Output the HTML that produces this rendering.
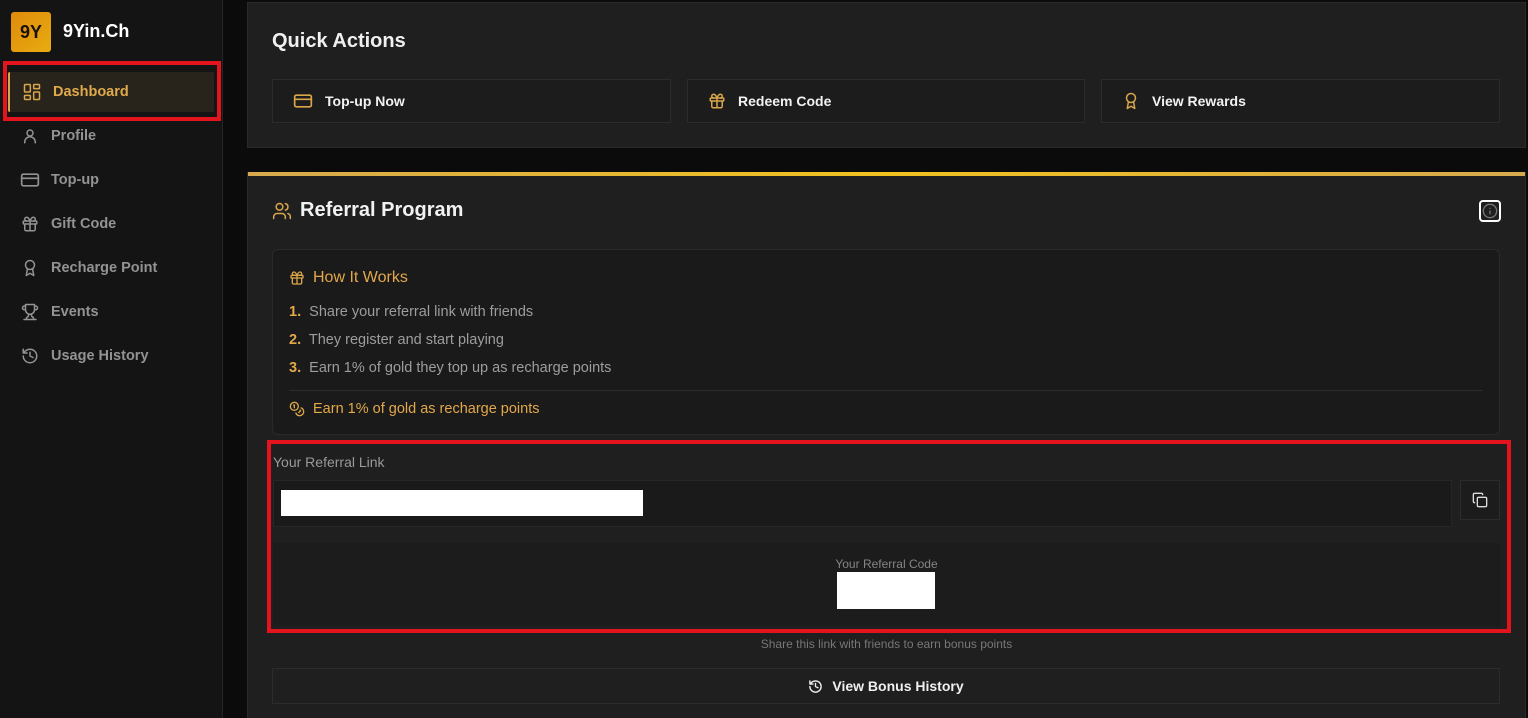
<!DOCTYPE html>
<html style="width:1528px;height:718px;overflow:hidden"><head><meta charset="utf-8"><style>
*{box-sizing:border-box;margin:0;padding:0}
body{width:1528px;height:718px;overflow:hidden;background:#0b0b0b;font-family:"Liberation Sans",sans-serif;position:relative}
.abs{position:absolute}
.side{left:0;top:0;width:223px;height:718px;background:#141414;border-right:1px solid #262626}
.logo{left:11px;top:12px;width:40px;height:40px;border-radius:3px;background:linear-gradient(135deg,#e08a0c,#e8ac10);color:#1a1206;font-weight:bold;font-size:18px;display:flex;align-items:center;justify-content:center}
.brand{left:63px;top:21px;color:#fff;font-weight:bold;font-size:18px}
.nav{left:0;width:222px;height:44px;display:flex;align-items:center;color:#939393;font-size:14.5px;font-weight:bold}
.nav .ic{width:20px;height:20px;margin-left:20px;margin-right:11px;display:flex;align-items:center;justify-content:center}
.card{background:#1f1f1f;border:1px solid #2a2a2a}
.qa{top:79px;height:44px;background:#1c1c1c;border:1px solid #2c2c2c;display:flex;align-items:center;color:#f2f2f2;font-weight:bold;font-size:14px}
.qa svg{margin-left:20px;margin-right:12px}
.gray{color:#9d9d9d;font-size:14.5px}
.num{color:#e2a84a;font-weight:bold}
svg{fill:none;stroke-linecap:round;stroke-linejoin:round}
</style></head><body>
<div class="abs side"></div>
<div class="abs logo">9Y</div>
<div class="abs brand">9Yin.Ch</div>
<div class="abs" style="left:8px;top:72px;width:206px;height:40px;background:#28231b;border-left:2px solid #d9a64a;border-radius:2px"></div>
<div class="abs nav" style="top:70px;color:#dfaa4c"><span class="ic" style="margin-left:22px"><svg width="20" height="20" viewBox="0 0 24 24" stroke="#d9a64a" stroke-width="1.8"><rect x="3" y="3" width="7" height="9" rx="1"/><rect x="14" y="3" width="7" height="5" rx="1"/><rect x="14" y="12" width="7" height="9" rx="1"/><rect x="3" y="16" width="7" height="5" rx="1"/></svg></span>Dashboard</div>
<div class="abs" style="left:3px;top:61px;width:218px;height:60px;border:4px solid #e4141e"></div>
<div class="abs nav" style="top:114px"><span class="ic"><svg width="18" height="18" viewBox="0 0 24 24" stroke="#939393" stroke-width="2"><circle cx="12" cy="8" r="4"/><path d="M5 21v-1a6 6 0 0 1 14 0v1"/></svg></span>Profile</div>
<div class="abs nav" style="top:158px"><span class="ic"><svg width="20" height="20" viewBox="0 0 24 24" stroke="#939393" stroke-width="2"><rect x="2" y="5" width="20" height="14" rx="2"/><path d="M2 10h20"/></svg></span>Top-up</div>
<div class="abs nav" style="top:202px"><span class="ic"><svg width="18" height="18" viewBox="0 0 24 24" stroke="#939393" stroke-width="2"><rect x="3" y="8" width="18" height="4" rx="1"/><path d="M12 8v13M19 12v7a2 2 0 0 1-2 2H7a2 2 0 0 1-2-2v-7M7.5 8a2.5 2.5 0 0 1 0-5C10 3 12 8 12 8s2-5 4.5-5a2.5 2.5 0 0 1 0 5"/></svg></span>Gift Code</div>
<div class="abs nav" style="top:246px"><span class="ic"><svg width="18" height="18" viewBox="0 0 24 24" stroke="#939393" stroke-width="2"><circle cx="12" cy="8" r="6"/><path d="M15.5 13.5 17 22l-5-3-5 3 1.5-8.5"/></svg></span>Recharge Point</div>
<div class="abs nav" style="top:290px"><span class="ic"><svg width="18" height="18" viewBox="0 0 24 24" stroke="#939393" stroke-width="2"><path d="M6 9H4.5a2.5 2.5 0 0 1 0-5H6M18 9h1.5a2.5 2.5 0 0 0 0-5H18M4 22h16M10 14.7V17c0 .6-.5 1-1 1.2C7.8 18.8 7 20.2 7 22M14 14.7V17c0 .6.5 1 1 1.2 1.2.6 2 2 2 3.8M18 2H6v7a6 6 0 0 0 12 0V2z"/></svg></span>Events</div>
<div class="abs nav" style="top:334px"><span class="ic"><svg width="18" height="18" viewBox="0 0 24 24" stroke="#939393" stroke-width="2"><path d="M3 12a9 9 0 1 0 9-9 9.75 9.75 0 0 0-6.74 2.74L3 8M3 3v5h5M12 7v5l4 2"/></svg></span>Usage History</div>

<div class="abs card" style="left:247px;top:2px;width:1279px;height:146px"></div>
<div class="abs" style="left:272px;top:30px;color:#f0f0f0;font-weight:bold;font-size:20px">Quick Actions</div>
<div class="abs qa" style="left:272px;width:399px"><svg width="20" height="20" viewBox="0 0 24 24" stroke="#d9a64a" stroke-width="2"><rect x="2" y="5" width="20" height="14" rx="2"/><path d="M2 10h20"/></svg>Top-up Now</div>
<div class="abs qa" style="left:687px;width:398px"><svg width="18" height="18" viewBox="0 0 24 24" stroke="#d9a64a" stroke-width="2"><rect x="3" y="8" width="18" height="4" rx="1"/><path d="M12 8v13M19 12v7a2 2 0 0 1-2 2H7a2 2 0 0 1-2-2v-7M7.5 8a2.5 2.5 0 0 1 0-5C10 3 12 8 12 8s2-5 4.5-5a2.5 2.5 0 0 1 0 5"/></svg>Redeem Code</div>
<div class="abs qa" style="left:1101px;width:399px"><svg width="18" height="18" viewBox="0 0 24 24" stroke="#d9a64a" stroke-width="2"><circle cx="12" cy="8" r="6"/><path d="M15.5 13.5 17 22l-5-3-5 3 1.5-8.5"/></svg>View Rewards</div>

<div class="abs card" style="left:247px;top:172px;width:1279px;height:546px;border-top:none;border-bottom:none"></div>
<div class="abs" style="left:248px;top:172px;width:1277px;height:4px;background:linear-gradient(90deg,#d6a94e,#f1c21e 50%,#d6a94e)"></div>
<svg class="abs" style="left:272px;top:201px" width="20" height="20" viewBox="0 0 24 24" stroke="#d9a64a" stroke-width="1.8"><circle cx="9" cy="7" r="4"/><path d="M2 21v-2a4 4 0 0 1 4-4h6a4 4 0 0 1 4 4v2M16 3.1a4 4 0 0 1 0 7.8M22 21v-2a4 4 0 0 0-3-3.9"/></svg>
<div class="abs" style="left:300px;top:199px;color:#f2f2f2;font-weight:bold;font-size:20px">Referral Program</div>
<div class="abs" style="left:1479px;top:200px;width:22px;height:22px;border:2px solid #fff;border-radius:4px;display:flex;align-items:center;justify-content:center"><svg width="16" height="16" viewBox="0 0 24 24" stroke="#777" stroke-width="2"><circle cx="12" cy="12" r="10"/><path d="M12 16v-4M12 8h.01"/></svg></div>

<div class="abs" style="left:272px;top:249px;width:1228px;height:186px;background:#1a1a1a;border:1px solid #2a2a2a;border-radius:6px"></div>
<svg class="abs" style="left:289px;top:270px" width="16" height="16" viewBox="0 0 24 24" stroke="#d9a64a" stroke-width="2"><rect x="3" y="8" width="18" height="4" rx="1"/><path d="M12 8v13M19 12v7a2 2 0 0 1-2 2H7a2 2 0 0 1-2-2v-7M7.5 8a2.5 2.5 0 0 1 0-5C10 3 12 8 12 8s2-5 4.5-5a2.5 2.5 0 0 1 0 5"/></svg>
<div class="abs" style="left:313px;top:269px;color:#e2a84a;font-size:16px">How It Works</div>
<div class="abs gray" style="left:289px;top:304px"><span class="num">1.</span>&nbsp; Share your referral link with friends</div>
<div class="abs gray" style="left:289px;top:332px"><span class="num">2.</span>&nbsp; They register and start playing</div>
<div class="abs gray" style="left:289px;top:360px"><span class="num">3.</span>&nbsp; Earn 1% of gold they top up as recharge points</div>
<div class="abs" style="left:289px;top:390px;width:1194px;height:1px;background:#2c2c2c"></div>
<svg class="abs" style="left:289px;top:401px" width="16" height="16" viewBox="0 0 24 24" stroke="#d9a64a" stroke-width="2"><circle cx="8" cy="8" r="6"/><path d="M18.1 10.4A6 6 0 1 1 10.3 18M7 6h1v4M16.7 13.9l.7.7-2.8 2.8"/></svg>
<div class="abs" style="left:313px;top:401px;color:#e2a84a;font-size:14.5px">Earn 1% of gold as recharge points</div>

<div class="abs" style="left:273px;top:454px;color:#9a9a9a;font-size:14px">Your Referral Link</div>
<div class="abs" style="left:273px;top:480px;width:1179px;height:47px;background:#1a1a1a;border:1px solid #262626"></div>
<div class="abs" style="left:281px;top:490px;width:362px;height:26px;background:#fff"></div>
<div class="abs" style="left:1460px;top:480px;width:40px;height:40px;background:#1c1c1c;border:1px solid #2c2c2c;display:flex;align-items:center;justify-content:center"><svg width="16" height="16" viewBox="0 0 24 24" stroke="#ddd" stroke-width="2"><rect x="8" y="8" width="14" height="14" rx="2"/><path d="M4 16c-1.1 0-2-.9-2-2V4c0-1.1.9-2 2-2h10c1.1 0 2 .9 2 2"/></svg></div>
<div class="abs" style="left:273px;top:543px;width:1227px;height:83px;background:#1c1c1c"></div>
<div class="abs" style="left:273px;top:557px;width:1227px;text-align:center;color:#858585;font-size:12px">Your Referral Code</div>
<div class="abs" style="left:837px;top:572px;width:98px;height:37px;background:#fff"></div>
<div class="abs" style="left:267px;top:440px;width:1244px;height:193px;border:4px solid #e4141e"></div>
<div class="abs" style="left:273px;top:637px;width:1227px;text-align:center;color:#777;font-size:12px">Share this link with friends to earn bonus points</div>
<div class="abs" style="left:272px;top:668px;width:1228px;height:36px;border:1px solid #2c2c2c;display:flex;align-items:center;justify-content:center;color:#f0f0f0;font-weight:bold;font-size:14px"><svg width="15" height="15" viewBox="0 0 24 24" stroke="#eee" stroke-width="2.2" style="margin-right:9px"><path d="M3 12a9 9 0 1 0 9-9 9.75 9.75 0 0 0-6.74 2.74L3 8M3 3v5h5M12 7v5l4 2"/></svg>View Bonus History</div>
</body></html>
